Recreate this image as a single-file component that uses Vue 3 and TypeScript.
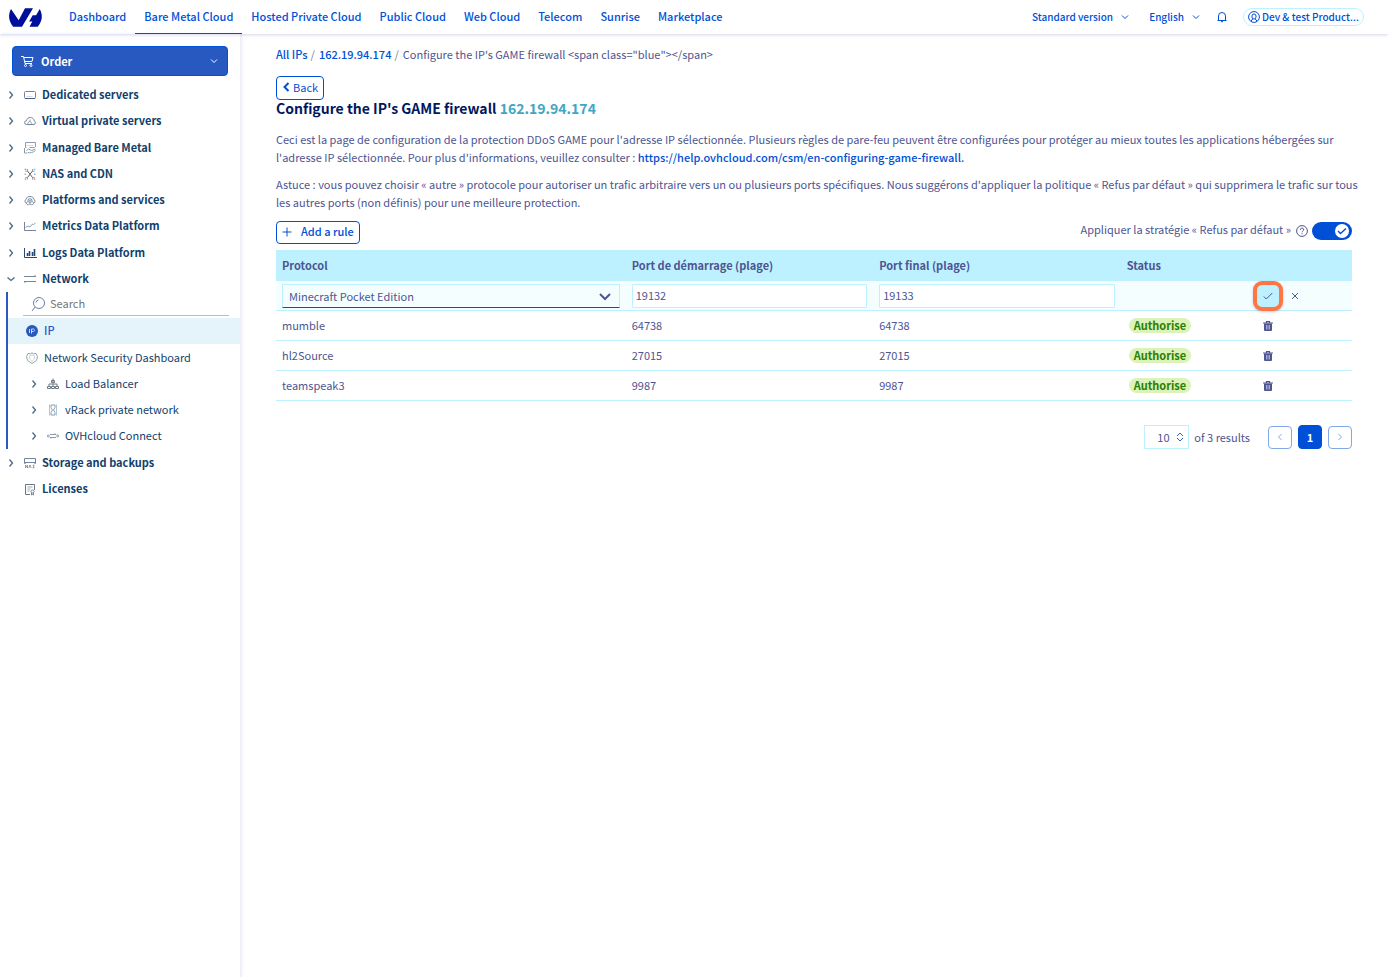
<script setup lang="ts">
import { ref } from 'vue'

interface Rule {
  protocol: string
  start: string
  end: string
}

const universes = [
  'Dashboard',
  'Bare Metal Cloud',
  'Hosted Private Cloud',
  'Public Cloud',
  'Web Cloud',
  'Telecom',
  'Sunrise',
  'Marketplace',
]

const topItems = [
  { label: 'Dedicated servers', icon: 'server' },
  { label: 'Virtual private servers', icon: 'cloud' },
  { label: 'Managed Bare Metal', icon: 'managed' },
  { label: 'NAS and CDN', icon: 'cdn' },
  { label: 'Platforms and services', icon: 'platform' },
  { label: 'Metrics Data Platform', icon: 'metrics' },
  { label: 'Logs Data Platform', icon: 'logs' },
  { label: 'Network', icon: 'network', open: true },
]

const subItems = [
  { label: 'Load Balancer', icon: 'balancer' },
  { label: 'vRack private network', icon: 'vrack' },
  { label: 'OVHcloud Connect', icon: 'connect' },
]

const bottomItems = [
  { label: 'Storage and backups', icon: 'nas', leaf: false },
  { label: 'Licenses', icon: 'license', leaf: true },
]

const rules: Rule[] = [
  { protocol: 'mumble', start: '64738', end: '64738' },
  { protocol: 'hl2Source', start: '27015', end: '27015' },
  { protocol: 'teamspeak3', start: '9987', end: '9987' },
]

const icons: Record<string, string> = {
  server:
    '<rect x="0.5" y="2.5" width="11" height="7" rx="1"/><path d="M1 9.500h10" stroke="#4a5f80"/><path d="M2.500 7.500h6" stroke="#d5d9e2"/>',
  cloud:
    '<path d="M2.500 9.500h7.500a1.900 1.900 0 0 0 .2-3.600C9.800 3.500 8.200 2.500 6.300 2.500S3 3.500 2.500 5.700a1.900 1.900 0 0 0 0 3.800z"/><path d="M4 9V7.500L6 6l2 3M6 6V4.500" stroke-width=".7"/>',
  managed:
    '<path d="M2.500 5.500h-1V.5h10v4l-1 1h-5" stroke="#8f9bab"/><path d="M2.500 3.500h7" stroke="#d5d9e2"/><path d="M.5 6v5h3M2.500 8.500l2-1.500 3 1.500 4-1.500M4 10.500c2 .8 5 0 7.500-2" stroke="#8f9bab"/>',
  cdn:
    '<path d="M3.500 3l5 6.500M8.500 3l-5 6.500" stroke="#59636f"/><path d="M1.500 3.500l2-.5V1M8.500 1v2l2 .5M10.500 9.500h-2v2M3.500 11.500v-2h-2" stroke="#7d8894" stroke-width=".8"/><circle cx="1.500" cy="1.500" r="1" fill="#8cb5a8" stroke="none"/><circle cx="10.500" cy="1.500" r="1" fill="#8ccbe0" stroke="none"/><circle cx="1.500" cy="11" r="1" fill="#8ccbe0" stroke="none"/><circle cx="10.500" cy="11" r="1" fill="#d4a28c" stroke="none"/><circle cx="1.200" cy="6.200" r=".8" fill="#c49a86" stroke="none"/><circle cx="10.800" cy="6.200" r=".8" fill="#8a98b0" stroke="none"/>',
  platform:
    '<path d="M2 9a2 2 0 0 1 0-3.500C2.500 3.300 4 2.500 6 2.500s3.500.8 4 3A2 2 0 0 1 10 9"/><path d="M6 4.500L8 5.500v2L6 8.500l-2-1v-2zM4 7.500L2.500 8.500v1.500L4 11l2-1 2 1 1.500-1V8.500L8 7.500M6 8.500V10M4 5.500l2 1 2-1M6 6.500v2" stroke-width=".8"/>',
  metrics: '<path d="M.5 2v8.500H12"/><path d="M1.500 7.500L4 6l2 1 2.500-3 1 .5 2-1.500" stroke-width=".8"/>',
  logs:
    '<path d="M.5 1v9.500H13" stroke="#244a73"/><path d="M3.500 9V6M5.500 9V4M8.500 9V5M10.500 9V2" stroke="#244a73" stroke-width="1.600"/>',
  network: '<path d="M0 3.500h12l-1.500-1.200M12 8.500H0l1.500 1.200"/>',
  balancer:
    '<path d="M6 .5v5M4.500 2.500h3v2h-3zM2 8V6h8v2M6 6v2" stroke="#6d7884"/><path d="M.5 8.500h3v2h-3zM4.500 8.500h3v2h-3zM8.500 8.500h3v2h-3z" stroke="#6d7884"/>',
  vrack:
    '<path d="M2.500.5v11M9.500.5v11" stroke="#a9c6dc"/><path d="M4 1h4v2.500L6.500 6 8 8.500V11H4V8.500L5.500 6 4 3.500z" stroke-width=".8"/>',
  connect:
    '<path d="M3 4.500h6L7.800 3.300M9 7.500H3l1.200 1.200" stroke="#8f9bab"/><circle cx="1.300" cy="6" r="1" stroke="#8f9bab"/><circle cx="10.700" cy="6" r="1" stroke="#8f9bab"/>',
  nas:
    '<path d="M1.500 6.500h-1v-5h11v5h-1M.5 5.500h11"/><path d="M1.500 11V8l2 3V8M4.800 11L6 8l1.200 3M10.500 8.200H9l1.200 2.600H8.500" stroke-width=".8"/>',
  license:
    '<path d="M6 11.500H1.500v-10h9V7" stroke="#6d7884"/><path d="M3.500 4h5M3.500 6h3M3.500 8h2" stroke-width=".7"/><circle cx="8.500" cy="8.500" r="1.500"/><path d="M7.500 10v2l1-.7 1 .7v-2"/>',
}

const protocol = ref('Minecraft Pocket Edition')
const startPort = ref('19132')
const endPort = ref('19133')
const refuseByDefault = ref(true)
const pageSize = ref('10')
const search = ref('')
</script>

<template>
  <div class="app">
    <header class="topbar">
      <a class="logo" href="#" aria-label="OVHcloud">
        <svg width="33" height="19" viewBox="0 0 33 19">
          <path d="M2 1l7.700 11.300L16 .3h8L13 18.700H4.200C-.8 12.500-.9 6.500 2 1z" />
          <path d="M30.700 1c3 5.500 3.300 11.500-2 17.700h-8.200l2.800-5.200h-3.200l3.600-6.300h3.400z" />
        </svg>
      </a>
      <nav class="universes" aria-label="Universes">
        <a v-for="u in universes" :key="u" href="#" :class="{ active: u === 'Bare Metal Cloud' }">{{ u }}</a>
      </nav>
      <div class="tools">
        <button type="button" class="tool version">
          Standard version
          <svg width="8" height="6" viewBox="0 0 8 6"><path d="M1 1.500l3 3 3-3" /></svg>
        </button>
        <button type="button" class="tool lang">
          English
          <svg width="8" height="6" viewBox="0 0 8 6"><path d="M1 1.500l3 3 3-3" /></svg>
        </button>
        <button type="button" class="tool bell" aria-label="Notifications">
          <svg width="10" height="10" viewBox="0 0 10 10"><path d="M.5 8.500h9M1.500 8.500V4a3.500 3.500 0 0 1 7 0v4.500M4 9.700h2" /></svg>
        </button>
        <button type="button" class="account">
          <svg width="12" height="12" viewBox="0 0 12 12"><circle cx="6" cy="6" r="5.400" /><path d="M3.500 10.500V9l1.500-1M8.500 10.500V9L7 8" /><rect x="4" y="3" width="4" height="5" rx="2" /></svg>
          <span>Dev &amp; test Product...</span>
        </button>
      </div>
    </header>

    <div class="body">
      <aside class="sidebar">
        <button type="button" class="order">
          <svg width="13" height="12" viewBox="0 0 13 12"><path d="M0 1.500h2.500l1.500 7h7M3 2.500h9l-1 4H3.800" /><circle cx="4.500" cy="10.500" r="1" /><circle cx="10" cy="10.500" r="1" /></svg>
          <span>Order</span>
          <svg class="caret" width="8" height="6" viewBox="0 0 8 6"><path d="M1 1.500l3 3 3-3" /></svg>
        </button>
        <nav class="menu" aria-label="Products">
          <a v-for="item in topItems" :key="item.label" href="#" class="entry">
            <svg class="chev" width="8" height="8" viewBox="0 0 8 8"><path :d="item.open ? 'M.5 2.500l3.500 3 3.500-3' : 'M2.500 .5l3 3.500-3 3.500'" /></svg>
            <svg class="ico" width="12" height="12" viewBox="0 0 12 12" v-html="icons[item.icon]" />
            {{ item.label }}
          </a>
          <div class="sub">
            <label class="search">
              <svg width="14" height="16" viewBox="0 0 14 16"><circle cx="8" cy="7" r="5.500" /><path d="M4 11l-3 4M5 6.500a3 3 0 0 1 2.500-2.500" /></svg>
              <input v-model="search" type="search" placeholder="Search" aria-label="Search" />
            </label>
            <a href="#" class="leaf current">
              <svg width="12" height="12" viewBox="0 0 12 12"><circle cx="6" cy="6" r="6" fill="#2859c0" stroke="none" /><path d="M3.500 4v4M5.500 8.500V4h2a1.300 1.300 0 0 1 0 2.500h-2" stroke="#c9d8f5" /></svg>
              IP
            </a>
            <a href="#" class="leaf">
              <svg width="12" height="12" viewBox="0 0 12 12"><path d="M6 .8l1.500 1 2.500-.3 1.500 3-1 4L6 11.500 1.500 8.500l-1-4L2 1.500l2.500.3z" stroke="#93a5ad" /><path d="M6 3l2.500.8c0 3-.5 4.500-2.500 5.400C4 8.300 3.500 6.800 3.500 3.800z" stroke="#c3cdd6" stroke-width=".8" /></svg>
              Network Security Dashboard
            </a>
            <a v-for="item in subItems" :key="item.label" href="#" class="nested">
              <svg class="chev" width="8" height="8" viewBox="0 0 8 8"><path d="M2.500 .5l3 3.500-3 3.500" /></svg>
              <svg class="ico" width="12" height="12" viewBox="0 0 12 12" v-html="icons[item.icon]" />
              {{ item.label }}
            </a>
          </div>
          <a v-for="item in bottomItems" :key="item.label" href="#" class="entry">
            <svg class="chev" width="8" height="8" viewBox="0 0 8 8"><path v-if="!item.leaf" d="M2.500 .5l3 3.500-3 3.500" /></svg>
            <svg class="ico" width="12" height="12" viewBox="0 0 12 12" v-html="icons[item.icon]" />
            {{ item.label }}
          </a>
        </nav>
      </aside>

      <main class="content">
        <nav class="crumbs" aria-label="Breadcrumb">
          <a href="#">All IPs</a><span class="sep">/</span>
          <a href="#">162.19.94.174</a><span class="sep">/</span>
          <span>Configure the IP's GAME firewall &lt;span class="blue"&gt;&lt;/span&gt;</span>
        </nav>
        <button type="button" class="back">
          <svg width="8" height="10" viewBox="0 0 8 10"><path d="M6.500 1l-4 4 4 4" /></svg>
          Back
        </button>
        <h1>Configure the IP's GAME firewall <span>162.19.94.174</span></h1>
        <p>
          Ceci est la page de configuration de la protection DDoS GAME pour l'adresse IP sélectionnée. Plusieurs règles de pare-feu peuvent être configurées pour protéger au mieux toutes les applications hébergées sur l'adresse IP sélectionnée. Pour plus d'informations, veuillez consulter :
          <a href="#">https://help.ovhcloud.com/csm/en-configuring-game-firewall.</a>
        </p>
        <p>
          Astuce : vous pouvez choisir « autre » protocole pour autoriser un trafic arbitraire vers un ou plusieurs ports spécifiques. Nous suggérons d'appliquer la politique « Refus par défaut » qui supprimera le trafic sur tous les autres ports (non définis) pour une meilleure protection.
        </p>

        <div class="actions">
          <button type="button" class="add">
            <svg width="10" height="10" viewBox="0 0 10 10"><path d="M5 .5v9M.5 5h9" /></svg>
            Add a rule
          </button>
          <div class="policy">
            <label for="policy">Appliquer la stratégie « Refus par défaut »</label>
            <svg width="12" height="12" viewBox="0 0 12 12"><circle cx="6" cy="6" r="5.400" /><path d="M4.400 4.800a1.600 1.600 0 1 1 2.300 1.300Q6 6.500 6 7.200M6 8.200v1" /></svg>
            <span class="toggle">
              <input id="policy" v-model="refuseByDefault" type="checkbox" />
              <span class="knob"><svg width="10" height="8" viewBox="0 0 10 8"><path d="M1 4l2.500 2.500L9 1.500" /></svg></span>
            </span>
          </div>
        </div>

        <table>
          <colgroup>
            <col class="c-protocol" /><col class="c-port" /><col class="c-port" /><col class="c-status" /><col />
          </colgroup>
          <thead>
            <tr>
              <th scope="col">Protocol</th>
              <th scope="col">Port de démarrage (plage)</th>
              <th scope="col">Port final (plage)</th>
              <th scope="col">Status</th>
              <td></td>
            </tr>
          </thead>
          <tbody>
            <tr class="editing">
              <td>
                <span class="select">
                  <select v-model="protocol" aria-label="Protocol">
                    <option>Minecraft Pocket Edition</option>
                  </select>
                  <svg width="14" height="10" viewBox="0 0 14 10"><path d="M2 2l5 5 5-5" /></svg>
                </span>
              </td>
              <td><input v-model="startPort" type="text" aria-label="Port de démarrage (plage)" /></td>
              <td><input v-model="endPort" type="text" aria-label="Port final (plage)" /></td>
              <td></td>
              <td>
                <div class="buttons">
                  <button type="button" class="confirm" aria-label="Confirm">
                    <svg width="10" height="8" viewBox="0 0 10 8"><path d="M.8 4.500l2.500 2.500L9.300 1" /></svg>
                  </button>
                  <button type="button" class="cancel" aria-label="Cancel">
                    <svg width="8" height="8" viewBox="0 0 8 8"><path d="M1 1l6 6M7 1L1 7" /></svg>
                  </button>
                </div>
              </td>
            </tr>
            <tr v-for="rule in rules" :key="rule.protocol">
              <td>{{ rule.protocol }}</td>
              <td>{{ rule.start }}</td>
              <td>{{ rule.end }}</td>
              <td><span class="badge">Authorise</span></td>
              <td>
                <button type="button" class="trash" aria-label="Delete">
                  <svg width="10" height="10" viewBox="0 0 10 10"><path d="M0 2h10M3.500 1.500v-1h3v1" fill="none" stroke="#4d5592" stroke-width="1.200" /><path d="M1 2.500h8V9a1 1 0 0 1-1 1H2a1 1 0 0 1-1-1z" fill="#4d5592" /><path d="M3.500 4v4.500M5 4v4.500M6.500 4v4.500" stroke="#c9cde0" stroke-width=".7" /></svg>
                </button>
              </td>
            </tr>
          </tbody>
        </table>

        <div class="pager">
          <span class="size">
            <select v-model="pageSize" aria-label="Results per page"><option>10</option></select>
            <svg width="8" height="10" viewBox="0 0 8 10"><path d="M1 4l3-3 3 3M1 6l3 3 3-3" /></svg>
          </span>
          <span class="count">of 3 results</span>
          <button type="button" class="page" aria-label="Previous page">
            <svg width="6" height="8" viewBox="0 0 6 8"><path d="M4.500 1l-3 3 3 3" /></svg>
          </button>
          <button type="button" class="page selected">1</button>
          <button type="button" class="page" aria-label="Next page">
            <svg width="6" height="8" viewBox="0 0 6 8"><path d="M1.500 1l3 3-3 3" /></svg>
          </button>
        </div>
      </main>
    </div>
  </div>
</template>

<style>
body {
  background: #fff;
}
</style>

<style scoped>
* {
  box-sizing: border-box;
}
.app {
  display: flex;
  flex-direction: column;
  min-height: 100vh;
  font: 11px/18px "Noto Sans CJK SC", "Noto Sans", sans-serif;
  color: #4d5592;
}
button,
input,
select {
  margin: 0;
  padding: 0;
  border: 0;
  background: none;
  font: inherit;
  color: inherit;
}
a {
  color: #0050d7;
  font-weight: 500;
  text-decoration: none;
}
svg {
  flex: none;
  overflow: visible;
  fill: none;
  stroke: currentColor;
}
.topbar {
  position: relative;
  z-index: 1;
  display: flex;
  align-items: center;
  height: 34px;
  padding: 0 24px 0 9px;
  box-shadow: 0 1px 3px rgba(0, 14, 156, 0.18);
}
.logo {
  display: flex;
  margin-right: 18px;
}
.logo svg {
  fill: #000e9c;
  stroke: none;
}
.universes {
  display: flex;
  align-self: stretch;
}
.universes a {
  padding: 7px 9px;
  border-bottom: 1px solid transparent;
}
.universes .active {
  border-bottom-color: #0050d7;
}
.tools {
  display: flex;
  align-items: center;
  margin-left: auto;
  padding-bottom: 1px;
  font-size: 10px;
  font-weight: 500;
  color: #0050d7;
}
.tool {
  display: flex;
  align-items: center;
  gap: 8px;
}
.version {
  margin-right: 20px;
}
.lang {
  margin-right: 17px;
}
.bell {
  margin-right: 16px;
}
.account {
  display: flex;
  align-items: center;
  gap: 2px;
  height: 18px;
  padding: 0 4px;
  border: 1px solid #bef1ff;
  border-radius: 9px;
}
.account span {
  line-height: 16px;
}
.body {
  display: flex;
  flex: 1;
}
.sidebar {
  flex: none;
  width: 241px;
  padding-top: 12px;
  border-right: 1px solid #eeeef9;
  box-shadow: 1px 0 3px rgba(0, 14, 156, 0.08);
}
.order {
  display: flex;
  align-items: center;
  gap: 7px;
  width: 216px;
  height: 30px;
  margin: 0 12px 6px;
  padding: 0 9px 1px 8px;
  border: 1px solid #0050d7;
  border-radius: 4px;
  background: #2859c0;
  color: #fff;
  font-weight: 700;
}
.order .caret {
  margin-left: auto;
}
.menu {
  display: flex;
  flex-direction: column;
}
.entry,
.leaf,
.nested {
  display: flex;
  align-items: center;
  height: 26px;
  padding-bottom: 2px;
  color: #113f6d;
}
.entry svg,
.leaf svg,
.nested svg {
  margin-top: 2px;
}
.entry {
  padding-left: 7px;
  font-weight: 700;
}
.entry:nth-child(2),
.entry:nth-child(6) {
  margin-bottom: 1px;
}
.chev {
  margin-right: 9px;
  color: #4b6a85;
  stroke-width: 1.3;
}
.ico {
  margin-right: 6px;
  color: #75849a;
}
.sub {
  margin-bottom: 1px;
  margin-left: 6px;
  border-left: 2px solid #2859c0;
}
.search {
  display: flex;
  align-items: center;
  gap: 5px;
  height: 24px;
  margin: 0 11px 2px 15px;
  padding-left: 8px;
  border-bottom: 1px solid #85d0f5;
  color: #6a7fae;
}
.search input {
  flex: 1;
  min-width: 0;
  height: 20px;
  padding-bottom: 2px;
  outline: 0;
  color: #4d5592;
  appearance: none;
}
.search input::placeholder {
  color: #757575;
  opacity: 1;
}
.leaf,
.nested {
  font-weight: 400;
}
.leaf {
  gap: 6px;
  padding-left: 18px;
}
.current {
  margin-bottom: 1px;
  background: #e5f3fb;
  color: #2859c0;
  font-weight: 500;
}
.nested {
  padding-left: 22px;
}
.content {
  flex: 1;
  min-width: 0;
  padding: 11px 36px 24px 35px;
}
.crumbs {
  display: flex;
  margin-bottom: 13px;
}
.sep {
  margin: 0 4px 0 3px;
  color: #7c7c9c;
}
.back,
.add {
  display: flex;
  align-items: center;
  height: 24px;
  padding: 0 5px 2px;
  border: 1px solid #0050d7;
  border-radius: 4px;
  color: #0050d7;
}
.back {
  gap: 3px;
}
.back svg {
  stroke-width: 2;
}
h1 {
  margin: 0 0 14px;
  color: #00185e;
  font-size: 14px;
  font-weight: 700;
  line-height: 16px;
}
h1 span {
  color: #41a6c4;
}
p {
  margin: 0 -10px 9px 0;
}
p a {
  display: inline-block;
}
.actions {
  display: flex;
  align-items: center;
  justify-content: space-between;
  margin: 9px 0 6px;
}
.add {
  gap: 9px;
  height: 23px;
  font-weight: 500;
}
.add svg {
  margin-top: 2px;
}
.policy {
  display: flex;
  align-items: center;
  gap: 5px;
  padding-bottom: 3px;
}
.policy label {
  padding-bottom: 3px;
}
.toggle {
  display: flex;
  position: relative;
  margin-left: -1px;
}
.toggle input {
  width: 40px;
  height: 18px;
  border-radius: 9px;
  background: #0050d7;
  appearance: none;
}
.knob {
  position: absolute;
  top: 2px;
  right: 3px;
  display: flex;
  align-items: center;
  justify-content: center;
  width: 14px;
  height: 14px;
  border-radius: 50%;
  background: #fff;
  color: #0050d7;
  pointer-events: none;
}
.knob svg {
  stroke-width: 1.4;
}
table {
  width: 100%;
  border-collapse: separate;
  border-spacing: 0;
  table-layout: fixed;
}
.c-protocol {
  width: 32.5%;
}
.c-port {
  width: 23%;
}
.c-status {
  width: 11.5%;
}
th,
td {
  height: 30px;
  padding: 0 6px 1px;
  border-bottom: 1px solid #bef1ff;
  text-align: left;
  vertical-align: middle;
}
th {
  height: 31px;
  font-weight: 700;
}
thead tr {
  background: #bef1ff;
}
.editing {
  background: #f5feff;
}
.editing td {
  padding-bottom: 0;
}
.editing input,
.select select {
  display: block;
  width: 100%;
  height: 24px;
  border: 1px solid #bef1ff;
  border-radius: 1px;
  background: #fff;
}
.editing input {
  padding: 0 3px 1px;
}
.select {
  display: block;
  position: relative;
}
.select select {
  padding: 0 6px;
  border-bottom-color: #0050d7;
  background: #f5feff;
  appearance: none;
}
.select svg {
  position: absolute;
  top: 8px;
  right: 8px;
  stroke-width: 2;
  pointer-events: none;
}
.buttons {
  display: flex;
  align-items: center;
  gap: 6px;
  margin-left: 3px;
}
.confirm,
.cancel,
.trash {
  display: flex;
  align-items: center;
  justify-content: center;
}
.confirm {
  width: 30px;
  height: 30px;
  margin: -1px 0;
  border: 4px solid #ff7644;
  border-radius: 9px;
  background: #bef1ff;
  box-shadow: 0 1px 3px rgba(77, 85, 146, 0.3);
}
.cancel {
  width: 12px;
  height: 18px;
}
.trash {
  width: 30px;
  height: 18px;
  margin-left: 3px;
  padding-top: 2px;
}
.trash svg {
  stroke: none;
}
.badge {
  display: inline-block;
  height: 15px;
  margin-left: 2px;
  padding: 0 5px;
  border-radius: 8px;
  background: #dbf2b8;
  color: #2b8000;
  font-weight: 700;
  line-height: 15px;
}
.pager {
  display: flex;
  align-items: center;
  justify-content: flex-end;
  margin-top: 24px;
}
.size {
  position: relative;
}
.size select {
  display: block;
  width: 45px;
  height: 24px;
  padding: 0 0 1px 12px;
  border: 1px solid #bef1ff;
  appearance: none;
}
.size svg {
  position: absolute;
  top: 7px;
  right: 5px;
  color: #2b62d0;
  pointer-events: none;
}
.count {
  margin: 0 18px 0 5px;
  padding-bottom: 1px;
}
.page {
  display: flex;
  align-items: center;
  justify-content: center;
  width: 24px;
  height: 23px;
  border: 1px solid #80a8eb;
  border-radius: 4px;
  color: #80a8eb;
}
.page + .page {
  margin-left: 6px;
}
.page.selected {
  height: 24px;
  border-color: #0050d7;
  background: #0050d7;
  color: #fff;
  font-weight: 700;
}
</style>
